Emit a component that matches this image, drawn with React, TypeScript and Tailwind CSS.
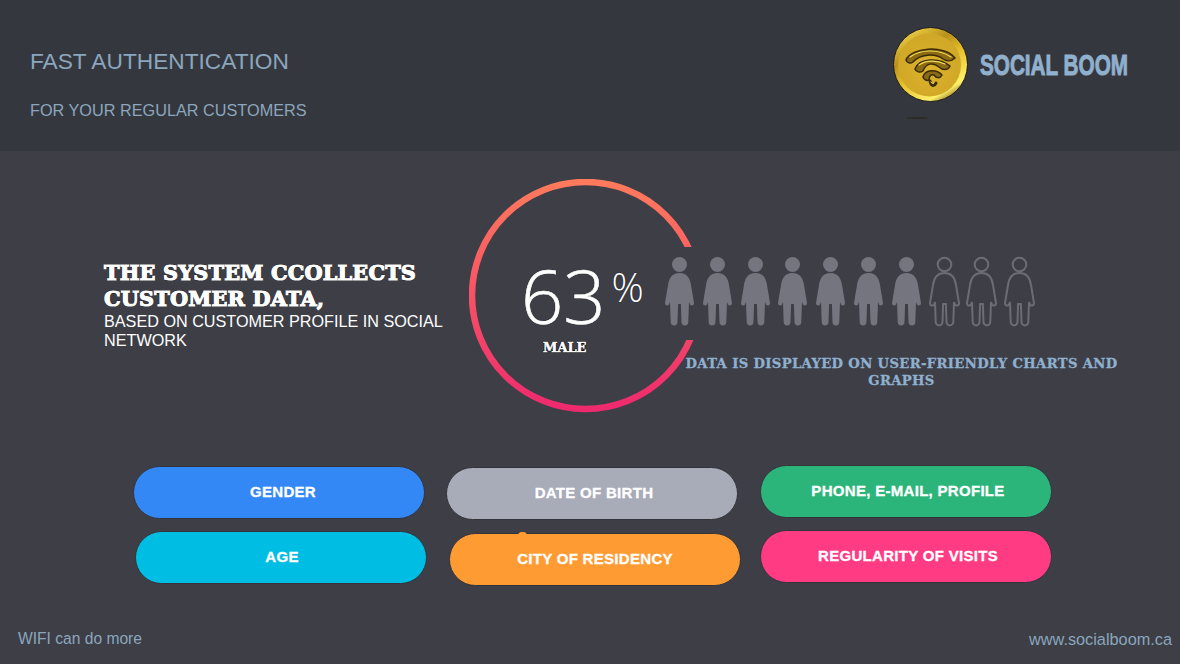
const PERSON_BODY =
  "M14.5 16C22 16 25 21 26 28L29 46C29.2 48.6 26 49.4 25 47.5L24 45L23.3 65A3.4 3.4 0 0 1 16.5 65L15.9 47H13.1L12.5 65A3.4 3.4 0 0 1 5.7 65L5 45L4 47.5C3 49.4 -0.2 48.6 0 46L3 28C4 21 7 16 14.5 16Z";

const Person = ({ filled }: { filled: boolean }) => (
  <svg width="31" height="71" viewBox="-1 -1 31 71" className="shrink-0">
    {filled ? (
      <g fill="#74757f">
        <circle cx="14.5" cy="7.5" r="7.5" />
        <path d={PERSON_BODY} />
      </g>
    ) : (
      <g fill="none" stroke="#6b6c76" strokeWidth="2">
        <circle cx="14.5" cy="7.5" r="6.8" />
        <path d={PERSON_BODY} />
      </g>
    )}
  </svg>
);

const Coin = () => (
  <svg width="78" height="94" viewBox="0 0 78 94">
    <defs>
      <linearGradient id="rim" x1="0.2" y1="0" x2="0.8" y2="1">
        <stop offset="0" stopColor="#f5d94a" />
        <stop offset="0.3" stopColor="#b8901a" />
        <stop offset="0.55" stopColor="#e8c22c" />
        <stop offset="0.85" stopColor="#fff06a" />
        <stop offset="1" stopColor="#6b5410" />
      </linearGradient>
      <radialGradient id="face" cx="0.5" cy="0.55" r="0.6">
        <stop offset="0" stopColor="#dcb22c" />
        <stop offset="1" stopColor="#cfa626" />
      </radialGradient>
    </defs>
    <circle cx="38.5" cy="38.5" r="37" fill="url(#rim)" stroke="#1c1a20" strokeWidth="1" />
    <circle cx="37.5" cy="39" r="31.5" fill="url(#face)" />
    <g fill="none" strokeLinecap="round">
      <path d="M14 34C18 22 52 18 63 32C59 36 54 35 51 33C43 27 28 28 21 36C18 38 15 37 14 34Z" fill="#8a6a12" stroke="#3a2c08" strokeWidth="1.5" />
      <path d="M18 31C29 23 47 23 59 31" stroke="#f6dc5c" strokeWidth="1.2" />
      <path d="M23 43C27 32 47 31 58 40C56 45 50 44 47 41C41 36 34 37 31 45C28 47 24 46 23 43Z" fill="#8a6a12" stroke="#3a2c08" strokeWidth="1.5" />
      <path d="M27 39C34 34 45 34 53 38" stroke="#f6dc5c" strokeWidth="1.2" />
      <path d="M31 51C33 43 45 43 50 49C48 53 44 52 42 49C39 48 37 50 37 54C35 55 32 54 31 51Z" fill="#8a6a12" stroke="#3a2c08" strokeWidth="1.5" />
      <path d="M38 55C39 60 42 61 44 57" stroke="#3a2c08" strokeWidth="3" />
      <path d="M39 56C40 58 41 58 42 57" stroke="#f6dc5c" strokeWidth="1" />
    </g>
    <ellipse cx="25" cy="92" rx="11" ry="1" fill="#2a251c" opacity="0.7" />
  </svg>
);

const Gauge = () => (
  <svg width="234" height="234" viewBox="0 0 234 234" className="block">
    <defs>
      <linearGradient id="ring" x1="0" y1="0" x2="0" y2="1">
        <stop offset="0" stopColor="#ff7a5c" />
        <stop offset="1" stopColor="#ee2a6e" />
      </linearGradient>
      <clipPath id="gap">
        <rect x="0" y="0" width="117" height="234" />
        <rect x="117" y="0" width="117" height="68" />
        <rect x="117" y="161" width="117" height="73" />
      </clipPath>
    </defs>
    <circle
      cx="116.5"
      cy="116.5"
      r="113.5"
      fill="none"
      stroke="url(#ring)"
      strokeWidth="6.5"
      clipPath="url(#gap)"
    />
  </svg>
);

const Pill = ({ label, className }: { label: string; className: string }) => (
  <div
    className={`flex h-[53px] w-[292px] items-center justify-center rounded-full border border-[#33343b] text-[15px] font-bold tracking-[0.3px] text-white [-webkit-text-stroke:0.3px_white] ${className}`}
  >
    {label}
  </div>
);

const outline =
  "[text-shadow:-1px_0_0_#111,1px_0_0_#111,0_-1px_0_#111,0_1px_0_#111]";

export default function App() {
  return (
    <div className="flex h-[664px] w-[1180px] flex-col overflow-hidden bg-[#3d3e46] font-['Liberation_Sans',sans-serif]">
      <header className="flex h-[151px] shrink-0 justify-between bg-[#35373e] pl-[30px] pr-[52px]">
        <div className="pt-[47px] text-[#8ba6bd]">
          <h1 className="text-[22.7px] leading-[28px]">FAST AUTHENTICATION</h1>
          <p className="mt-[25px] text-[16.25px] leading-[20px]">
            FOR YOUR REGULAR CUSTOMERS
          </p>
        </div>
        <div className="flex items-start gap-[10px] pt-[26px]">
          <Coin />
          <span className="mt-[22px] block w-[148px] origin-left scale-x-[0.69] whitespace-nowrap text-[30px] leading-[34px] font-bold text-[#8fb0ce] [-webkit-text-stroke:1px_#8fb0ce] [text-shadow:0_1px_0_#3a2a24]">
            SOCIAL BOOM
          </span>
        </div>
      </header>

      <main className="flex flex-1 flex-col">
        <section className="flex h-[282px] pl-[104px] pt-[28px]">
          <div className="w-[365px] shrink-0 pt-[81px]">
            <h2
              className={`font-['DejaVu_Serif',serif] text-[20.8px] leading-[26px] font-bold tracking-[0.2px] text-white [-webkit-text-stroke:1.2px_white] ${outline}`}
            >
              THE SYSTEM CCOLLECTS
              <br />
              CUSTOMER DATA,
            </h2>
            <p className="w-[345px] text-[16.2px] leading-[19px] text-white">
              BASED ON CUSTOMER PROFILE IN SOCIAL NETWORK
            </p>
          </div>

          <div className="relative h-[234px] w-[234px] shrink-0">
            <Gauge />
            <div className="absolute left-[52px] top-[82px] flex items-start text-white [text-shadow:0_0_1px_#111]">
              <span className="font-['Open_Sans',sans-serif] text-[74px] leading-[70px] font-light [-webkit-text-stroke:0.6px_white]">
                63
              </span>
              <span className="ml-[6px] mt-[3px] font-['Open_Sans',sans-serif] text-[40px] leading-[46px] font-light">
                %
              </span>
            </div>
            <span
              className={`absolute left-[74px] top-[161px] font-['DejaVu_Serif',serif] text-[13px] leading-[16px] font-bold text-white [-webkit-text-stroke:0.5px_white] ${outline}`}
            >
              MALE
            </span>
          </div>

          <div className="relative z-10 ml-[-39px] flex flex-col pt-[77px]">
            <div className="flex gap-[6.8px]">
              {[0, 1, 2, 3, 4, 5, 6, 7, 8, 9].map((i) => (
                <Person key={i} filled={i < 7} />
              ))}
            </div>
            <p className="ml-[21px] mt-[29px] w-[433px] text-center font-['DejaVu_Serif',serif] text-[13.2px] leading-[16.5px] font-bold tracking-[0.35px] text-[#8fb0ce] [-webkit-text-stroke:0.3px_#8fb0ce]">
              DATA IS DISPLAYED ON USER-FRIENDLY CHARTS AND GRAPHS
            </p>
          </div>
        </section>

        <section className="mt-[33px] flex pl-[133px]">
          <div className="flex flex-col">
            <Pill label="GENDER" className="bg-[#3388f5] pl-[8px]" />
            <Pill label="AGE" className="ml-[2px] mt-[12px] bg-[#00bde3] pl-[2px]" />
          </div>
          <div className="relative ml-[19px] mt-[1px] flex flex-col">
            <Pill label="DATE OF BIRTH" className="bg-[#a8abb8] pl-[4px]" />
            <span className="absolute left-[72px] top-[65px] h-[4px] w-[9px] rounded-t-full bg-[#ff9b33]" />
            <Pill label="CITY OF RESIDENCY" className="ml-[3px] mt-[13px] bg-[#ff9b33]" />
          </div>
          <div className="ml-[19px] mt-[-1px] flex flex-col">
            <Pill label="PHONE, E-MAIL, PROFILE" className="bg-[#2bb57a] pl-[4px]" />
            <Pill label="REGULARITY OF VISITS" className="mt-[12px] bg-[#ff3b84] pl-[4px]" />
          </div>
        </section>

        <footer className="mt-auto flex justify-between pb-[15px] pl-[18px] pr-[8px] leading-[20px] text-[#8ba6bd]">
          <span className="text-[15.6px]">WIFI can do more</span>
          <span className="text-[16.3px]">www.socialboom.ca</span>
        </footer>
      </main>
    </div>
  );
}
